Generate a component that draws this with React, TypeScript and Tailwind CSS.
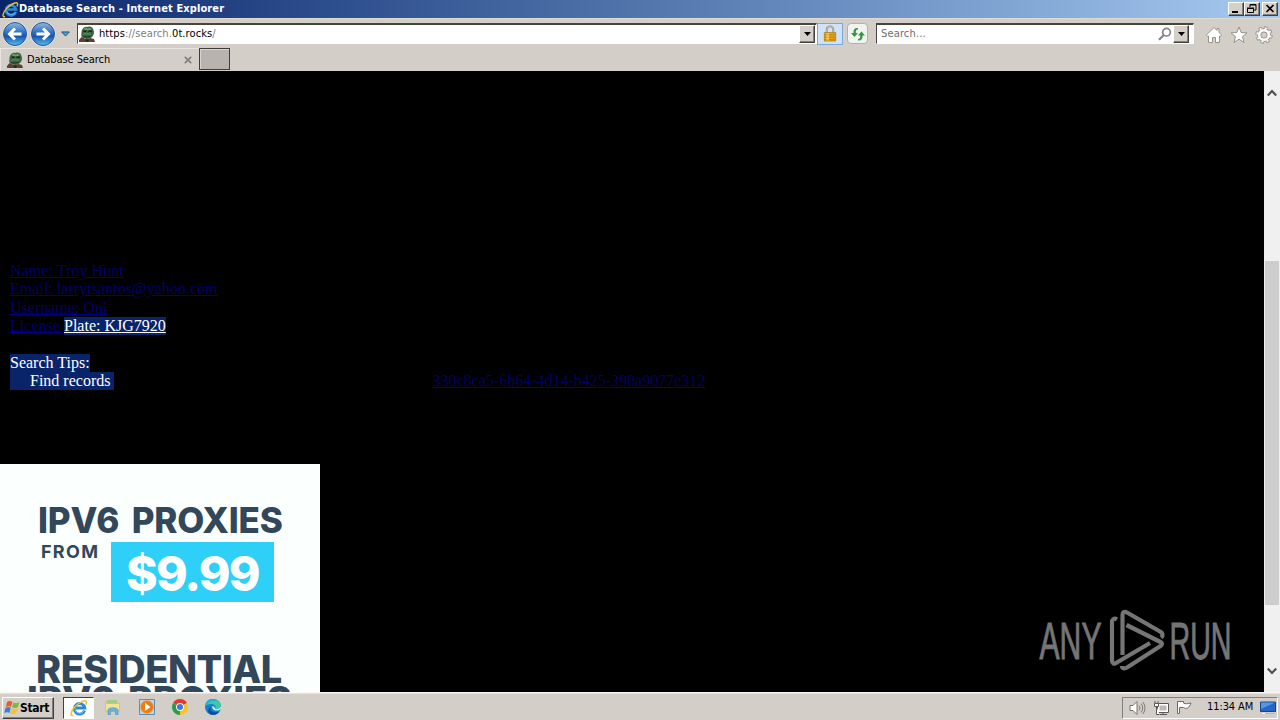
import type { ReactNode } from "react"

const IeLogo = ({ className }: { className?: string }) => (
	<svg viewBox="0 0 18 18" className={className} fill="none">
		<path d="M14.6 11.5A5.3 5.3 0 1 1 14.8 9H6" stroke="#2b8ad8" strokeWidth="2.9" />
		<path d="M14.2 11.9A5.2 5.2 0 0 1 5 11" stroke="#7cc8f4" strokeWidth="1" />
		<path d="M3.2 16.4C-.2 17.6.5 12.6 5 7.8 10 2.4 16.6.2 16.6 3.2c0 .8-.3 1.6-.8 2.4" stroke="#f3bd2b" strokeWidth="1.5" />
	</svg>
)

const FrogIcon = () => (
	<svg viewBox="0 0 16 16" className="h-4 w-4 shrink-0">
		<path d="M0 16v-2l2.500-3 4 2 5-1 3.500 1 1 3z" fill="#5f4030" />
		<path d="M3.500 3C5 .5 7 .3 8.500 1c3-1.200 5.500.5 6 3 1 2.500.5 5-1.500 7-2 1.800-5 2.500-7.500 1.500C3 12 1.500 10 2.500 7.500 2.300 6 2.500 4.500 3.500 3z" fill="#3b6540" />
		<path d="M4.500 2.800c1-1.300 2.800-1.300 4-.3 1.700-1 3.500-.5 4.500 1l-3 .8-4-.3z" fill="#6b9868" />
		<path d="M4.500 5.200h2.800M9.500 5.200h3.300" stroke="#16230f" strokeWidth="1.400" />
		<path d="M4 8.500c2-1 5-1 8 0" stroke="#5a8757" strokeWidth="1.200" fill="none" />
		<path d="M4.500 10.500c2.500.8 5 .8 7.500-.5" stroke="#1c3020" strokeWidth="1" fill="none" />
		<path d="m6 13.500 1.500 2.500h1.500l1-2.500z" fill="#2b2522" />
	</svg>
)

const NavButton = ({ flip }: { flip?: boolean }) => (
	<svg viewBox="0 0 26 26" className="h-[26px] w-[26px]">
		<defs>
			<linearGradient id="orb" x1="0" y1="0" x2="0" y2="1">
				<stop offset="0" stopColor="#8fb8e4" />
				<stop offset=".45" stopColor="#2c6fc2" />
				<stop offset=".6" stopColor="#1656ad" />
				<stop offset="1" stopColor="#56c0f2" />
			</linearGradient>
		</defs>
		<circle cx="13" cy="13" r="12.500" fill="#e9eef5" />
		<circle cx="13" cy="13" r="11.500" fill="url(#orb)" stroke="#24528f" />
		<path
			d="M13 7.500 7.500 13l5.500 5.500M8 13h11.500"
			transform={flip ? "matrix(-1 0 0 1 26 0)" : undefined}
			stroke="#fff"
			strokeWidth="3"
			fill="none"
		/>
	</svg>
)

const DropButton = () => (
	<div className="flex h-[18px] w-4 items-center justify-center border border-t-white border-l-white border-r-[#404040] border-b-[#404040] bg-[#d4d0c8] shadow-[inset_-1px_-1px_0_#808080]">
		<svg viewBox="0 0 7 4" className="h-1 w-[7px]"><path d="M0 0h7L3.500 4z" /></svg>
	</div>
)

const CaptionButton = ({ children }: { children: ReactNode }) => (
	<div className="h-[14px] w-4 border border-t-white border-l-white border-r-[#404040] border-b-[#404040] bg-[#d4d0c8] shadow-[inset_-1px_-1px_0_#808080]">
		<svg viewBox="0 0 14 12" className="h-3 w-[14px]" fill="none" stroke="#000">{children}</svg>
	</div>
)

const TitleBar = () => (
	<div className="flex h-[18px] items-center bg-gradient-to-r from-[#0a246a] to-[#a6caf0] pl-0.5 pr-0.5">
		<IeLogo className="h-[17px] w-[17px]" />
		<span className="whitespace-nowrap text-[11px] font-bold leading-[18px] tracking-[0.11px] text-white">Database Search - Internet Explorer</span>
		<div className="ml-auto flex">
			<CaptionButton><path d="M3 9h6" strokeWidth="2" /></CaptionButton>
			<CaptionButton><path d="M5 4V1.500h6V7H9M5 2h6M2.500 5.500h6v4h-6zM2 5h7" /></CaptionButton>
			<div className="w-0.5"></div>
			<CaptionButton><path d="m3.500 2 7 7m0-7-7 7" strokeWidth="1.600" /></CaptionButton>
		</div>
	</div>
)

const NavBar = () => (
	<div className="flex h-[30px] items-center border-t border-[#dedbd5] pl-0.5 pr-[7px]">
		<div className="flex w-[75px] items-center gap-0.5">
			<NavButton />
			<NavButton flip />
			<svg viewBox="0 0 10 6" className="ml-[3px] h-1.5 w-[9px]"><path d="M.7.700h8.600L5 5.300z" fill="#4ba0d2" stroke="#154c80" /></svg>
		</div>
		<div className="flex h-[21px] w-[740px] items-center border border-t-2 border-t-[#484440] border-l-[#484440] border-r-white border-b-white bg-white pl-px pr-px">
			<FrogIcon />
			<span className="ml-1 whitespace-nowrap text-[11px] tracking-[0.1px] text-black">
				https<span className="text-[#808080]">://search.</span>0t.rocks<span className="text-[#808080]">/</span>
			</span>
			<div className="ml-auto"><DropButton /></div>
		</div>
		<div className="flex h-[22px] w-[26px] items-center justify-center border border-[#7da7dc] bg-[#cfe2f8]">
			<svg viewBox="0 0 14 18" className="h-[17px] w-[14px]">
				<path d="M3.500 9V5a3.500 3.500 0 0 1 7 0v4" fill="none" stroke="#8d867a" strokeWidth="2" />
				<path d="M3.500 9V5a3.500 3.500 0 0 1 7 0v4" fill="none" stroke="#dcd8cf" strokeWidth=".7" />
				<path d="M1 8h12v9H1z" fill="#e3a51c" stroke="#a87508" strokeWidth=".7" />
				<path d="M1 10.500h12M1 13h12M1 15.500h12" stroke="#b97c0a" strokeWidth=".8" />
				<path d="M3 8.500h3v8H3z" fill="#f7d059" opacity=".65" />
			</svg>
		</div>
		<div className="ml-1 flex h-[21px] w-[21px] items-center justify-center rounded-sm border border-[#b1b2b0] bg-[#f1f3f1]">
			<svg viewBox="0 0 16 16" className="h-4 w-4" fill="#34943a">
				<path d="M8 2C4.500 1.800 3.300 3.500 3.500 7H1l3.500 4L8 7H5.800C5.500 5 6 3.500 8 3.200z" />
				<path d="M8 14.500c3.500.2 4.700-1.500 4.500-5H15l-3.500-4L8 9.500h2.200c.3 2-.2 3.500-2.200 3.800z" />
			</svg>
		</div>
		<div className="ml-2 flex h-[21px] w-[318px] items-center border border-t-2 border-t-[#484440] border-l-[#484440] border-r-white border-b-white bg-white pl-1 pr-1">
			<span className="text-[11px] tracking-[0.15px] text-[#6d6d6d]">Search...</span>
			<svg viewBox="0 0 14 14" className="ml-auto mr-px h-[14px] w-[14px]" fill="none" stroke="#85858a">
				<circle cx="8.500" cy="5.200" r="3.800" strokeWidth="1.700" />
				<path d="M5.800 8 1 12.800" strokeWidth="2.200" />
			</svg>
			<DropButton />
		</div>
		<div className="ml-auto flex items-center gap-[7px] pt-0.5">
			<svg viewBox="0 0 18 18" className="h-[18px] w-[18px]" fill="#fff" stroke="#96928e">
				<path d="M9 1.500 1.300 9l1.500 1.500.7-.5v6.500h4v-5h3v5h4V10l.7.500L16.700 9 14 6.500v-4h-2v2z" />
			</svg>
			<svg viewBox="0 0 18 18" className="h-[18px] w-[18px]" fill="#fff" stroke="#96928e">
				<path d="m9 1 2.200 5.500 5.800.4-4.500 3.700L14 16.500l-5-3.300-5 3.300 1.500-5.900L1 6.900l5.800-.4z" />
			</svg>
			<svg viewBox="0 0 18 18" className="h-[18px] w-[18px]">
				<circle cx="9" cy="9" r="7" fill="none" stroke="#96928e" strokeWidth="3.400" strokeDasharray="3.100 2.398" />
				<circle cx="9" cy="9" r="4.800" fill="none" stroke="#96928e" strokeWidth="4.400" />
				<circle cx="9" cy="9" r="6.700" fill="none" stroke="#fff" strokeWidth="2" strokeDasharray="1.900 3.362" strokeDashoffset="-.6" />
				<circle cx="9" cy="9" r="4.800" fill="none" stroke="#fff" strokeWidth="2.600" />
			</svg>
		</div>
	</div>
)

const TabBar = () => (
	<div className="flex h-[23px] items-start">
		<div className="flex h-[23px] w-[199px] items-center border-l border-t border-[#e9e6e2] pl-1.5 pr-[7px]">
			<FrogIcon />
			<span className="ml-1 whitespace-nowrap text-[11px] tracking-[-0.08px] text-black">Database Search</span>
			<svg viewBox="0 0 8 8" className="ml-auto h-2 w-2"><path d="m.8.800 6.400 6.400m0-6.400L.8 7.200" stroke="#83807c" strokeWidth="1.700" /></svg>
		</div>
		<div className="h-[22px] w-[31px] border border-[#403c3a] bg-[#b9b3af] shadow-[inset_1px_1px_0_#d8d4d0]"></div>
	</div>
)

const Records = () => (
	<div className="pl-2.5 pt-[191px] font-['Liberation_Serif','Times_New_Roman',serif] text-[16px] leading-[18.3px] text-[#000068]">
		<div className="underline decoration-[#000084]">
			<div className="tracking-[0.06px]">Name: Troy Hunt</div>
			<div className="tracking-[0.03px]">Email: larrytsantos@yahoo.com</div>
			<div>Username: Oni</div>
			<div className="flex">
				<span className="w-[54px] whitespace-pre">License </span>
				<span className="bg-[#0a246a] text-white decoration-white underline">Plate: KJG7920</span>
			</div>
		</div>
		<div className="mt-[18.500px] flex">
			<span className="bg-[#0a246a] text-white">Search Tips:</span>
		</div>
		<div className="flex">
			<span className="w-[104px] bg-[#0a246a] pl-5 text-white">Find records</span>
			<span className="ml-[318.500px] underline decoration-[#00009a]">330c8ca5-6b64-4d14-b425-390a9077e312</span>
		</div>
	</div>
)

const ProxyAd = () => (
	<div className="flex h-[228px] w-80 flex-col overflow-hidden bg-[#fbfffe] pt-[35px] font-['Inter',sans-serif] text-[#33475b]">
		<div className="ml-[38px] whitespace-nowrap text-[35px] font-extrabold leading-[43px] tracking-[-0.15px] [word-spacing:5px]">IPV6 PROXIES</div>
		<div className="flex h-[60px]">
			<div className="w-[111px] pl-[41px] text-[18px] font-bold leading-[19px] tracking-[1.3px]">FROM</div>
			<div className="w-[163px] whitespace-nowrap bg-[#2ed0f8] pl-[15px] text-[48px] font-extrabold leading-[64px] tracking-[-1.8px] text-white">$9.99</div>
		</div>
		<div className="mt-12 ml-9 whitespace-nowrap text-[38px] font-extrabold leading-[38px] tracking-[-0.5px]">RESIDENTIAL</div>
		<div className="-mt-[6px] ml-[27px] whitespace-nowrap text-[38px] font-extrabold leading-[36px] tracking-[-0.2px] [word-spacing:5px]">IPV6 PROXIES</div>
	</div>
)

const Watermark = () => (
	<svg viewBox="0 0 200 70" className="absolute bottom-[17px] right-[29px] h-[70px] w-[200px] overflow-visible" fill="#757575">
		<g stroke="#757575" strokeWidth="1" fontSize="51" fontFamily="Liberation Sans">
			<text x="4.500" y="54" textLength="62" lengthAdjust="spacingAndGlyphs">ANY</text>
			<text x="134.500" y="54" textLength="62" lengthAdjust="spacingAndGlyphs">RUN</text>
		</g>
		<g fill="none" stroke="#757575" strokeWidth="4.200" strokeLinejoin="round">
			<path d="M82 14.500c-3-2-5 0-5 3v38c0 3 2 4 4 2.500L115 38" />
			<path d="M87.500 50V10c0-3 2-4 4.500-2.500l33 19c3 1.500 3.500 4 1 6" />
			<path d="m91.500 20 34 17c2 1 2 2.500 0 4L92 62.500c-2.500 1.500-5 1-5-1.500" />
		</g>
	</svg>
)

const ScrollBar = () => (
	<div className="flex w-4 flex-col bg-[#f0f0f0]">
		<div className="flex h-[190px] justify-center pt-[18px]">
			<svg viewBox="0 0 10 8" className="h-2 w-2.5"><path d="m.8 6.500 4.200-4.500 4.200 4.500" fill="none" stroke="#505050" strokeWidth="2.200" /></svg>
		</div>
		<div className="mx-px h-[344px] bg-[#cdcdcd]"></div>
		<div className="mt-auto flex justify-center pb-[17px]">
			<svg viewBox="0 0 10 8" className="h-2 w-2.5"><path d="M.8 1.500 5 6l4.200-4.500" fill="none" stroke="#505050" strokeWidth="2.200" /></svg>
		</div>
	</div>
)

const FolderIcon = () => (
	<svg viewBox="0 0 18 18" className="h-[18px] w-[18px]">
		<path d="M1.500 3h5l1 1.500H15V14H1.500z" fill="#e9c75e" />
		<path d="M3 2h10v4H3z" fill="#9dcf8a" />
		<path d="M1.500 5.500h14V13h-14z" fill="#f6e39b" stroke="#d7b456" strokeWidth=".6" />
		<path d="M4 16.500V12c0-3 10-3 10 0v4.500h-2.500V13h-5v3.500z" fill="#6eb7dc" stroke="#438fb9" strokeWidth=".6" />
	</svg>
)

const MediaIcon = () => (
	<svg viewBox="0 0 18 18" className="h-[18px] w-[18px]">
		<path d="M1.500 1.500h15v15h-15z" fill="#b9d7ee" stroke="#588fbd" />
		<circle cx="9" cy="9" r="6.500" fill="#ee7b10" stroke="#e6aa66" />
		<path d="m7 5 5.500 4L7 13z" fill="#fff" />
	</svg>
)

const ChromeIcon = () => (
	<svg viewBox="0 0 16 16" className="h-4 w-4">
		<path d="M8 8 1.070 4A8 8 0 0 1 14.930 4z" fill="#e23a2e" />
		<path d="M8 8V16A8 8 0 0 1 1.070 4z" fill="#289d4b" />
		<path d="m8 8 6.930-4A8 8 0 0 1 8 16z" fill="#f9c51f" />
		<circle cx="8" cy="8" r="3.900" fill="#fff" />
		<circle cx="8" cy="8" r="3" fill="#3b78e7" />
	</svg>
)

const EdgeIcon = () => (
	<svg viewBox="0 0 16 16" className="ml-px h-4 w-4">
		<circle cx="8" cy="8" r="8" fill="#137fd0" />
		<path d="M.1 7C1.500-2 16-2 16 6.500c0 3-3 4.500-6 3.500 1.500-2 0-5-3.500-5C3 5 1 6 .1 7z" fill="#40c7a6" />
		<path d="M.1 7C1.500-2 10-1 13 2 8 1 2 3 .1 7z" fill="#23acd7" />
		<path d="M5.500 8c-1 5 4 6.500 9 4.500-3 4-9 4.500-11 1-1-2 0-4.500 2-5.500z" fill="#0c4e9d" />
		<path d="M7.500 7c-1 2 1 5 4.500 4.500 2 0 3-.7 3.700-1.500l.3-3c-1 3-4 3.500-6 3C10.500 9 9 7.500 7.500 7z" fill="#d4eeee" />
	</svg>
)

const StartFlag = () => (
	<svg viewBox="0 0 16 16" className="h-4 w-4 shrink-0">
		<path d="M3 2c2-1.500 4-1 5.500 0L7 7C5.500 6 3.500 6 1.800 7z" fill="#e7602c" />
		<path d="M9.300 2.500c2 1 4 .8 6-.5L14 7c-2 1.300-4 1.200-6 .300z" fill="#79b94a" />
		<path d="M1.500 8c2-1.300 3.600-1 5.200-.2L5.500 13C4 12 2 12 .2 13z" fill="#3b80cf" />
		<path d="M7.600 8.300c2 1 4 .9 6-.3l-1.400 5c-2 1.400-4 1.200-5.800.4z" fill="#f3c231" />
	</svg>
)

const TaskBar = () => (
	<div className="flex h-[28px] items-center border-t border-[#f8f6f2] bg-[#d4cec8] pl-0.5 pr-0.5 shadow-[inset_0_1px_0_#e8e4dd]">
		<div className="mt-0.5 flex h-[22px] w-[52px] items-center border border-t-white border-l-white border-r-[#404040] border-b-[#404040] pl-px shadow-[inset_-1px_-1px_0_#808080]">
			<StartFlag />
			<span className="text-[12px] font-bold leading-4 tracking-[-0.3px] text-black">Start</span>
		</div>
		<div className="ml-[9px] mt-0.5 flex h-[22px] w-[31px] items-center justify-center border border-t-[#404040] border-l-[#404040] border-r-white border-b-white bg-white">
			<IeLogo className="h-[18px] w-[18px]" />
		</div>
		<div className="ml-[10px] flex items-center gap-4 pt-px">
			<FolderIcon />
			<MediaIcon />
			<ChromeIcon />
			<EdgeIcon />
		</div>
		<div className="ml-auto mt-0.5 flex h-[22px] w-[156px] items-center border border-t-[#808080] border-l-[#808080] border-r-white border-b-white pl-1.5 pr-px">
			<svg viewBox="0 0 17 16" className="h-4 w-[17px]" fill="none" stroke="#77736e">
				<path d="M1 5.500h3l4-4v13l-4-4H1z" fill="#fff" />
				<path d="M10 5.500q2 2.500 0 5M12 3.500q3.500 4.500 0 9M14 2q4 6 0 12" strokeWidth=".9" />
			</svg>
			<svg viewBox="0 0 17 16" className="ml-[7px] h-4 w-[17px]" fill="#fff" stroke="#5c5855">
				<path d="M4.500 3.500h11v9h-11zM7 14.500h7M10 12.500v2" />
				<path d="M6.500 5.500h7v5h-7z" fill="#bcb8b3" stroke="none" />
				<path d="M1.500 3.500h4v3h-4zM2 1v2.500M5 1v2.500M3.500 6.500v8h3" />
			</svg>
			<svg viewBox="0 0 17 16" className="ml-1.5 h-4 w-[17px]" fill="#fff" stroke="#6c6864">
				<path d="M1.500 13.500v-12h6v1.500c2 1.500 4 .500 7.500 0-.8 2.500-2 4-3.500 5-1.500.5-2.500.5-4-.5h-4v6z" />
			</svg>
			<span className="ml-[14px] whitespace-nowrap text-[11px] tracking-[-0.1px] text-black">11:34 AM</span>
			<svg viewBox="0 0 16 14" className="ml-auto h-[14px] w-4">
				<path d="M.5 1h15v9.500H.5z" fill="#2467c5" stroke="#174684" />
				<path d="M1 1.500h14L1 8z" fill="#5795df" />
				<path d="M1 12.500h14" stroke="#a6b9cd" />
				<path d="M2 12.500h3" stroke="#fff" />
			</svg>
		</div>
	</div>
)

export default function App() {
	return (
		<div className="flex h-[720px] w-[1280px] flex-col overflow-hidden bg-[#d4cec8] font-['DejaVu_Sans_Condensed','DejaVu_Sans',sans-serif] [font-stretch:condensed]">
			<TitleBar />
			<NavBar />
			<TabBar />
			<div className="flex h-[621px]">
				<div className="relative flex w-[1264px] flex-col justify-between overflow-hidden bg-black">
					<Records />
					<ProxyAd />
					<Watermark />
				</div>
				<ScrollBar />
			</div>
			<TaskBar />
		</div>
	)
}
